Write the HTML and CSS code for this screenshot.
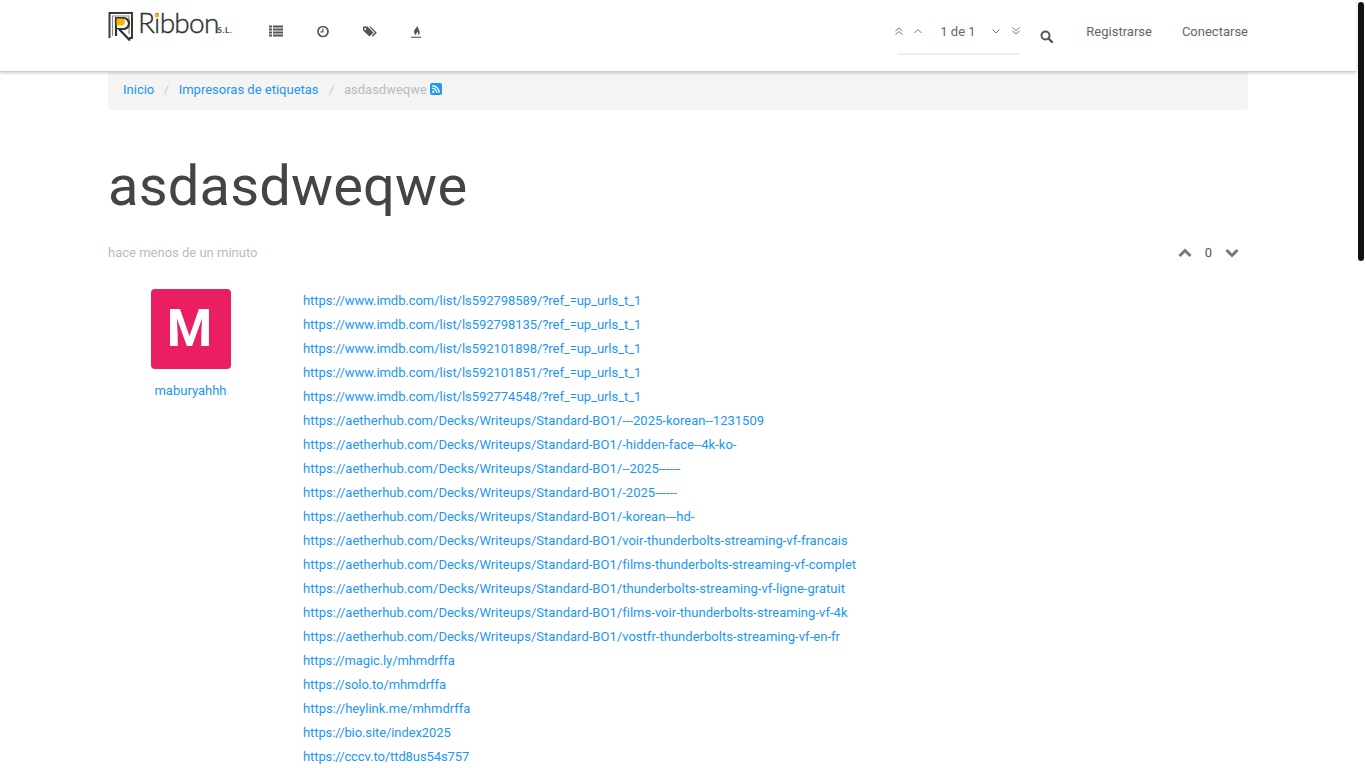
FILE: index.html
```html
<!DOCTYPE html>
<html lang="es">
<head>
<meta charset="utf-8">
<title>asdasdweqwe</title>
<link rel="stylesheet" href="styles.css">
</head>
<body>
<header class="navbar">
  <div class="wrap nav-inner">
    <a class="logo" href="#">
      <svg width="128" height="44" viewBox="0 -6 128 44">
        <path d="M1.500 27V2h22.500v25h-3" fill="none" stroke="#3a3a3a" stroke-width="2"/>
        <path d="M4.500 25V5h16.500v18" fill="none" stroke="#8a8a8a" stroke-width="1.200"/>
        <path d="M8 25V7h7.500a5 5 0 0 1 0 11H11l11 11.500" fill="none" stroke="#333" stroke-width="2.200"/>
        <path d="M8.500 7.500h5a3.500 3.500 0 0 1 0 7h-5z" fill="#f7b500"/>
        <text class="logo-word" x="30" y="22">Ribbon</text>
        <circle cx="49" cy="4.500" r="2.200" fill="#f7b500"/>
        <text class="logo-sl" x="109.500" y="22">S.L.</text>
      </svg>
    </a>
    <nav class="nav-icons">
      <a href="#"><svg class="ic" width="14" height="14" viewBox="0 0 14 14"><path d="M0 2h3v2H0zM4 2h10v2H4zM0 5h3v2H0zM4 5h10v2H4zM0 8h3v2H0zM4 8h10v2H4zM0 11h3v2H0zM4 11h10v2H4z" transform="translate(0 -.5)"/></svg></a>
      <a href="#"><svg class="ic" width="14" height="14" viewBox="0 0 14 14"><circle cx="7" cy="7.500" r="5" fill="none" stroke="#555" stroke-width="1.700"/><path d="M6.800 4.500v3.300H4.500" fill="none" stroke="#555" stroke-width="1.200"/></svg></a>
      <a href="#"><svg class="ic" width="14" height="14" viewBox="0 0 14 14"><path d="M0 2.500h4.500L10.500 8.500 6.500 12.500 0 6.500zM2.200 4a1 1 0 1 0 .01 0z" fill-rule="evenodd"/><path d="M6 2.500h1.500l6.300 6.200-4 4-1-1 3-3.200z"/></svg></a>
      <a href="#"><svg class="ic" width="14" height="16" viewBox="0 0 14 16"><path d="M7.200 1c.5 2.300-3.200 4-3.200 6.800 0 1.700 1 2.900 2.300 3.500-.6-1.500.7-2.400.9-3.800.8.800 1.200 2.100 1 3.700 1-.7 1.600-2 1.500-3.300C9.500 5.500 7.300 3.500 7.200 1z"/><path d="M1 12.700h10v1.100H1z"/></svg></a>
    </nav>
    <div class="pager">
      <svg class="ang" width="10" height="10" viewBox="0 0 10 10"><path d="M1.500 5l3.500-3 3.500 3M1.500 8.500l3.500-3 3.500 3"/></svg>
      <svg class="ang second" width="10" height="10" viewBox="0 0 10 10"><path d="M1.500 7l3.500-3.500 3.500 3.500"/></svg>
      <span class="pager-text">1 de 1</span>
      <svg class="ang third" width="10" height="10" viewBox="0 0 10 10"><path d="M1.500 3.500l3.500 3.500 3.500-3.500"/></svg>
      <svg class="ang fourth" width="10" height="10" viewBox="0 0 10 10"><path d="M1.500 1.500l3.500 3 3.500-3M1.500 5l3.500 3 3.500-3"/></svg>
    </div>
    <a class="search" href="#"><svg width="13" height="13" viewBox="0 0 13 13"><circle cx="5.500" cy="5.500" r="4" fill="none" stroke="#555" stroke-width="2"/><path d="M8.500 8.500l3.500 3.500" stroke="#555" stroke-width="2.400" stroke-linecap="round"/></svg></a>
    <a class="nav-link first" href="#">Registrarse</a>
    <a class="nav-link" href="#">Conectarse</a>
  </div>
</header>
<main class="wrap page">
  <ol class="crumbs">
    <li><a href="#">Inicio</a></li>
    <li><a href="#">Impresoras de etiquetas</a></li>
    <li class="current">asdasdweqwe <svg class="rss" width="12" height="12" viewBox="0 0 12 12"><rect width="12" height="12" rx="2" fill="#2196f3"/><circle cx="3.300" cy="8.700" r="1.200" fill="#fff"/><path d="M2.200 5.300a4.500 4.500 0 0 1 4.500 4.500M2.200 2.800a7 7 0 0 1 7 7" fill="none" stroke="#fff" stroke-width="1.400"/></svg></li>
  </ol>
  <h1 class="title">asdasdweqwe</h1>
  <div class="meta">
    <span class="when">hace menos de un minuto</span>
    <div class="votes">
      <svg width="14" height="10" viewBox="0 0 14 10"><path d="M1.500 8L7 2.500 12.500 8" fill="none" stroke="#777" stroke-width="3"/></svg>
      <span class="count">0</span>
      <svg width="14" height="10" viewBox="0 0 14 10"><path d="M1.500 2L7 7.500 12.500 2" fill="none" stroke="#777" stroke-width="3"/></svg>
    </div>
  </div>
  <article class="post">
    <div class="author">
      <div class="avatar">M</div>
      <a class="username" href="#">maburyahhh</a>
    </div>
    <div class="links">
      <a class="imdb" href="#">https://www.imdb.com/list/ls592798589/?ref_=up_urls_t_1</a>
      <a class="imdb" href="#">https://www.imdb.com/list/ls592798135/?ref_=up_urls_t_1</a>
      <a class="imdb" href="#">https://www.imdb.com/list/ls592101898/?ref_=up_urls_t_1</a>
      <a class="imdb" href="#">https://www.imdb.com/list/ls592101851/?ref_=up_urls_t_1</a>
      <a class="imdb" href="#">https://www.imdb.com/list/ls592774548/?ref_=up_urls_t_1</a>
      <a class="aether" href="#">https://aetherhub.com/Decks/Writeups/Standard-BO1/---2025-korean--1231509</a>
      <a class="aether" href="#">https://aetherhub.com/Decks/Writeups/Standard-BO1/-hidden-face--4k-ko-</a>
      <a class="aether" href="#">https://aetherhub.com/Decks/Writeups/Standard-BO1/--2025------</a>
      <a class="aether" href="#">https://aetherhub.com/Decks/Writeups/Standard-BO1/-2025------</a>
      <a class="aether" href="#">https://aetherhub.com/Decks/Writeups/Standard-BO1/-korean---hd-</a>
      <a class="aether" href="#">https://aetherhub.com/Decks/Writeups/Standard-BO1/voir-thunderbolts-streaming-vf-francais</a>
      <a class="aether" href="#">https://aetherhub.com/Decks/Writeups/Standard-BO1/films-thunderbolts-streaming-vf-complet</a>
      <a class="aether" href="#">https://aetherhub.com/Decks/Writeups/Standard-BO1/thunderbolts-streaming-vf-ligne-gratuit</a>
      <a class="aether" href="#">https://aetherhub.com/Decks/Writeups/Standard-BO1/films-voir-thunderbolts-streaming-vf-4k</a>
      <a class="aether" href="#">https://aetherhub.com/Decks/Writeups/Standard-BO1/vostfr-thunderbolts-streaming-vf-en-fr</a>
      <a class="short" href="#">https://magic.ly/mhmdrffa</a>
      <a class="short" href="#">https://solo.to/mhmdrffa</a>
      <a href="#">https://heylink.me/mhmdrffa</a>
      <a class="short" href="#">https://bio.site/index2025</a>
      <a class="short" href="#">https://cccv.to/ttd8us54s757</a>
    </div>
  </article>
</main>
<div class="scroll-thumb"></div>
</body>
</html>
```
FILE: styles.css
```css
* { box-sizing: border-box; }
html::-webkit-scrollbar { display: none; }
body { margin: 0; padding-right: 10px; background: #fff; color: #555; font: 13px/24px Roboto, sans-serif; }
a { color: #2196f3; text-decoration: none; }
.wrap { width: 1140px; margin: 0 auto; }
.scroll-thumb { position: fixed; top: 2px; right: 2px; width: 6px; height: 259px; background: #111; border-radius: 3px; }
.navbar { height: 72px; background: #fff; border-bottom: 1px solid #ccc; box-shadow: 0 1px 3px rgba(0,0,0,.2); position: relative; }
.nav-inner { display: flex; align-items: flex-start; height: 71px; }
.logo { display: block; margin-top: 5px; width: 128px; height: 44px; }
.logo svg { display: block; }
.logo-word { font: 300 28px Lato, sans-serif; fill: #333; stroke: #333; stroke-width: .4px; letter-spacing: -.7px; }
.logo-sl { font: 700 8px Lato, sans-serif; fill: #444; letter-spacing: .6px; }
.nav-icons { display: flex; margin-left: 33px; margin-top: 24px; gap: 33px; }
.nav-icons a { display: block; width: 14px; height: 16px; }
.ic { display: block; fill: #555; }
.pager { margin-left: auto; width: 124px; height: 55px; padding-top: 20px; display: flex; align-items: flex-start; position: relative; }
.pager::after { content: ""; position: absolute; left: 4px; right: -1px; bottom: 0; height: 2px; background: #eee; }
.ang { fill: none; stroke: #777; stroke-width: 1; margin-top: 6px; flex: none; }
.second { margin-left: 9px; }
.pager-text { margin-left: 17px; width: 34px; flex: none; white-space: nowrap; color: #666; line-height: 24px; }
.third { margin-left: 17px; }
.fourth { margin-left: 10px; }
.search { display: block; margin: 30px 0 0 22px; width: 13px; height: 13px; }
.search svg { display: block; }
.nav-link { color: #666; margin: 20px 0 0 30px; }
.nav-link.first { margin-left: 33px; }
.page { min-height: 2206px; }
.crumbs { list-style: none; margin: 0; padding: 0 15px 2px; height: 38px; background: #f4f4f4; border-radius: 0 0 4px 4px; display: flex; align-items: center; }
.crumbs li + li::before { content: "/"; color: #ccc; padding: 0 9.5px; }
.current { color: #bbb; margin-left: 1px; }
.rss { vertical-align: -1px; }
.title { margin: 37px 0 0; font-weight: 400; font-size: 56px; line-height: 78px; letter-spacing: .18px; color: #444; }
.meta { display: flex; justify-content: space-between; align-items: center; margin-top: 16px; height: 24px; padding-right: 9px; }
.when { color: #bbb; }
.votes { display: flex; align-items: center; gap: 13px; }
.count { color: #555; }
.post { display: grid; grid-template-columns: 165px 1fr; column-gap: 30px; margin-top: 24px; }
.author { display: flex; flex-direction: column; align-items: center; }
.avatar { width: 80px; height: 80px; padding-right: 2px; background: #e91e63; border-radius: 4px; color: #fff; font-size: 52px; font-weight: 700; line-height: 80px; text-align: center; }
.username { margin-top: 10px; }
.links { display: flex; flex-direction: column; align-items: flex-start; }
.imdb { letter-spacing: -.055px; }
.aether { letter-spacing: .025px; }
.short { letter-spacing: -.09px; }
```
